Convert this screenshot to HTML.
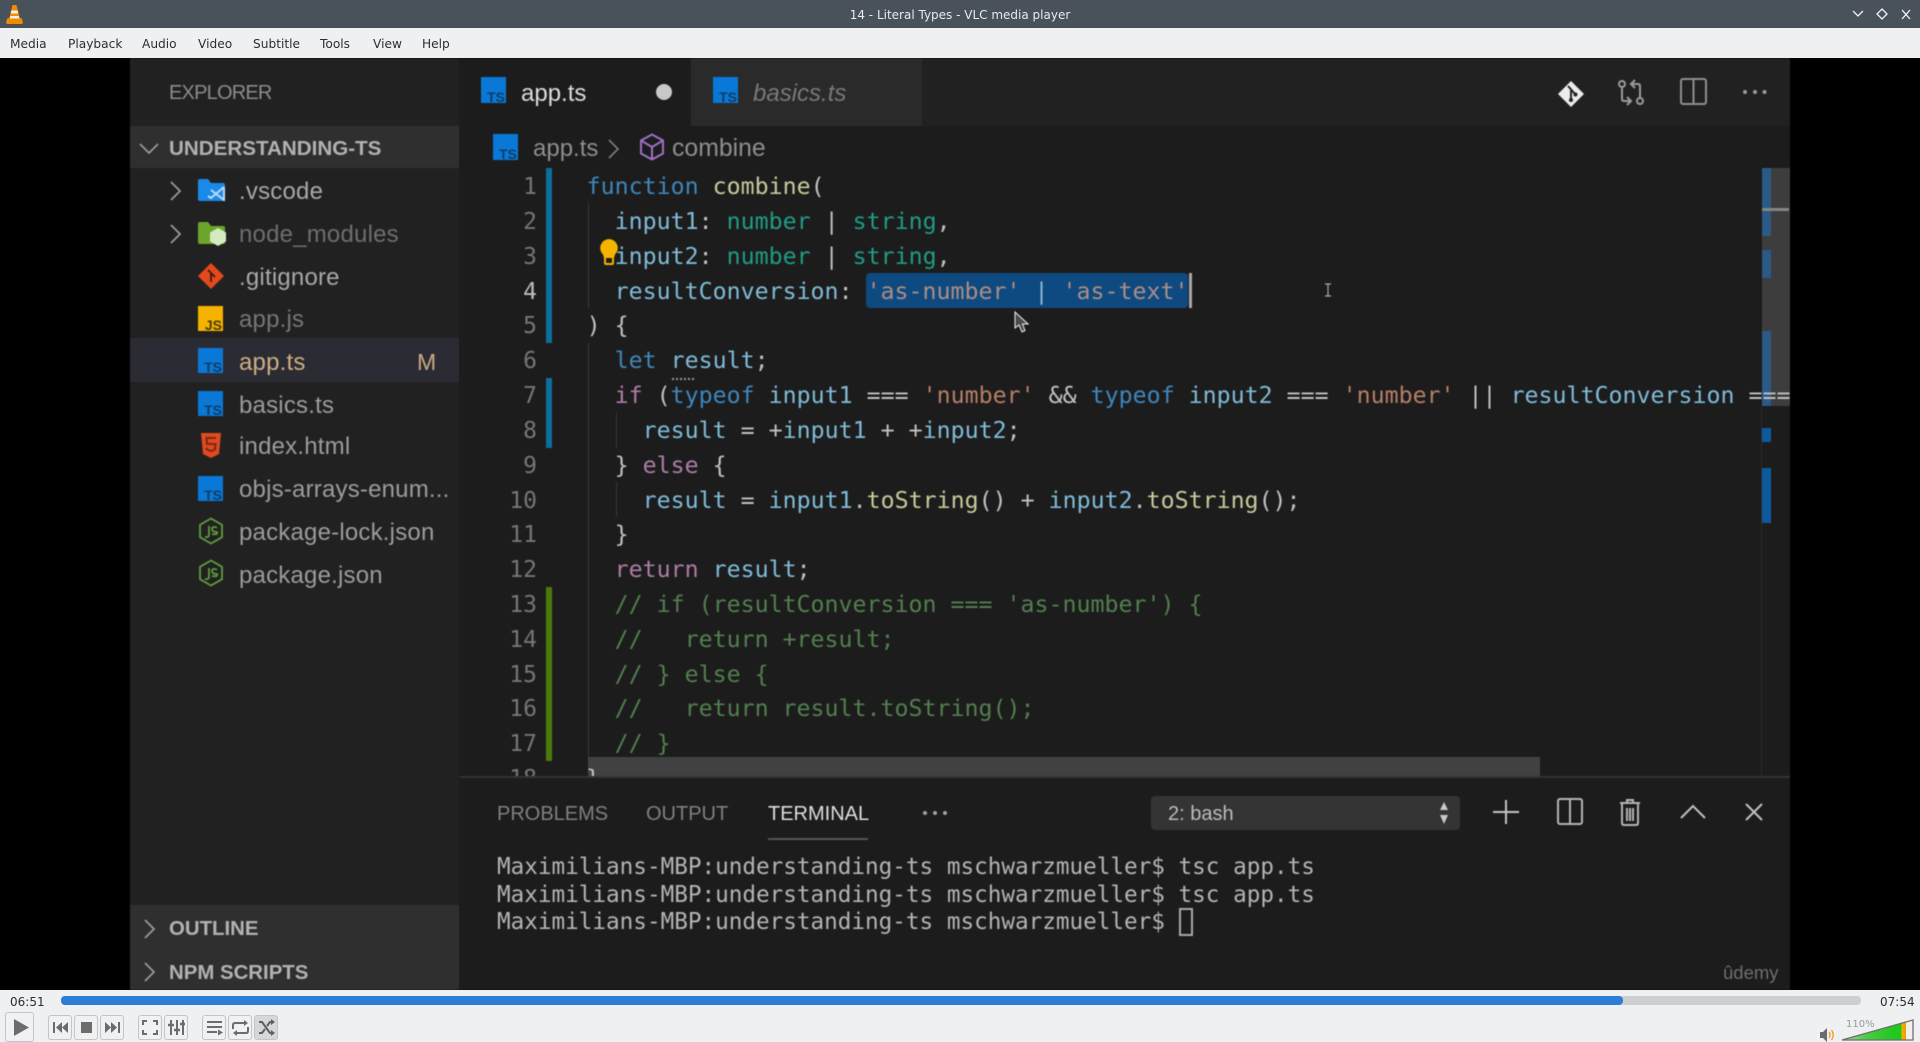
<!DOCTYPE html>
<html lang="en"><head><meta charset="utf-8"><title>14 - Literal Types - VLC media player</title>
<style>
html,body{margin:0;padding:0;width:1920px;height:1042px;overflow:hidden;background:#000}
body{position:relative;font-family:"DejaVu Sans","Liberation Sans",sans-serif}
.a{position:absolute;white-space:pre}
svg{position:absolute;overflow:visible}
#bar{left:0;top:0;width:1920px;height:28px;background:#49525a}
#menu{left:0;top:28px;width:1920px;height:30px;background:#eff0f2}
.m{top:29px;line-height:30px;font-size:12.2px;color:#2b2f33}
#video{position:absolute;left:0;top:58px;width:1920px;height:932px;background:#000;overflow:hidden}
#vid{position:absolute;left:0;top:-58px;width:1920px;height:1042px;filter:blur(.5px)}
.s{font-family:"Liberation Sans",sans-serif;font-size:24px;letter-spacing:.2px;color:#9c9c9c;left:239px;line-height:30px;margin-top:.8px}
.b{font-family:"Liberation Sans",sans-serif;font-weight:bold;color:#b2b2b2;font-size:20.4px;line-height:30px;left:169px}
.ts{position:absolute;width:25px;height:25px;background:#0a78d6;overflow:hidden}
.ts span{position:absolute;right:1px;bottom:-1px;font:bold 14px/14px "Liberation Sans",sans-serif;color:#0f3d66}
.ln{font-family:"DejaVu Sans Mono",monospace;font-size:23px;line-height:35px;color:#767676;width:40px;left:497px;text-align:right;margin-top:2.4px}
.c{font-family:"DejaVu Sans Mono",monospace;font-size:23.26px;line-height:35px;left:586.6px;color:#c2c2c2;margin-top:1.2px}
.k{color:#3f86bc}.f{color:#c9c99b}.v{color:#7fbbd8}.t{color:#1f9c86}.q{color:#b67f66}.r{color:#ad7ca6}.g{color:#527f4e}.sq{color:#ad8d84}
.tm{font-family:"DejaVu Sans Mono",monospace;font-size:22.65px;line-height:27px;left:497px;color:#b4b4b4;margin-top:2.9px}
.p{font-family:"Liberation Sans",sans-serif;font-size:20px;line-height:28px;top:800px;color:#808080}
.btn{position:absolute;box-sizing:border-box;width:24px;height:25px;top:1015px;border:1px solid #c3c5c8;border-radius:3px;background:#f0f1f3}
.gr{position:absolute;background:#373737;width:1px}
.mk{position:absolute;left:1762px;width:9px;background:#0d5a9e}
</style></head><body>
<div id="bar" class="a"></div>
<svg style="left:6px;top:5px" width="17" height="19" viewBox="0 0 17 19"><path d="M6.5 0h4l1.5 6 1.8 7H15.5l1.5 4.5-1 1.5H1l-1-1.5L1.500 13h1.800L5 6z" fill="#f08a00"/><path d="M5.500 5.500h6l.8 3h-7.600zM4.300 11h8.400l.5 2.500H3.800z" fill="#f7f0e6"/></svg>
<div class="a" style="left:560px;width:800px;top:1px;line-height:28px;text-align:center;font-size:12px;color:#e8eaec">14 - Literal Types - VLC media player</div>
<svg style="left:1850px;top:6px" width="66" height="16" viewBox="0 0 66 16" fill="none" stroke="#f2f2f2" stroke-width="1.300"><path d="M3 5l5 5 5-5M32 3l5 5-5 5-5-5zM52 4l8 9M60 4l-8 9"/></svg>
<div id="menu" class="a"></div>
<div class="a m" style="left:10px">Media</div><div class="a m" style="left:68px">Playback</div><div class="a m" style="left:142px">Audio</div><div class="a m" style="left:198px">Video</div><div class="a m" style="left:253px">Subtitle</div><div class="a m" style="left:320px">Tools</div><div class="a m" style="left:373px">View</div><div class="a m" style="left:422px">Help</div>

<div id="video"><div id="vid">
<!-- sidebar -->
<div class="a" style="left:130px;top:58px;width:329px;height:932px;background:#212121"></div>
<div class="a" style="left:459px;top:58px;width:1331px;height:932px;background:#1c1c1c"></div>
<div class="a" style="left:130px;top:126px;width:329px;height:42px;background:#2f2f2f"></div>
<div class="a" style="left:130px;top:338px;width:329px;height:44px;background:#2b2b33"></div>
<div class="a" style="left:130px;top:905px;width:329px;height:85px;background:#2f2f2f"></div>
<div class="a" style="left:169px;top:78px;line-height:30px;font:20px/30px 'Liberation Sans',sans-serif;letter-spacing:-.8px;color:#8c8c8c">EXPLORER</div>
<div class="a b" style="top:134px;font-size:20.600px">UNDERSTANDING-TS</div>
<svg style="left:139px;top:142px" width="20" height="12" fill="none" stroke="#999" stroke-width="1.800"><path d="M1 2l9 9 9-9"/></svg>
<svg style="left:170px;top:181px" width="12" height="20" fill="none" stroke="#9a9a9a" stroke-width="1.800"><path d="M1 1l9 9-9 9"/></svg>
<svg style="left:170px;top:224px" width="12" height="20" fill="none" stroke="#9a9a9a" stroke-width="1.800"><path d="M1 1l9 9-9 9"/></svg>
<svg style="left:197px;top:178px" width="30" height="26" viewBox="0 0 30 26"><path d="M1 3q0-2 2-2h8l3 4h12q2 0 2 2v14q0 2-2 2H3q-2 0-2-2z" fill="#1a8ae8"/><path d="M27 9v14M27 9L14 20l-3-2M14 12l13 10" fill="none" stroke="#b9daf8" stroke-width="2"/></svg>
<svg style="left:197px;top:221px" width="30" height="26" viewBox="0 0 30 26"><path d="M1 3q0-2 2-2h8l3 4h12q2 0 2 2v14q0 2-2 2H3q-2 0-2-2z" fill="#6ca52c"/><path d="M21 7l8 4.500v9L21 25l-8-4.500v-9z" fill="#d4eabf"/></svg>
<svg style="left:197px;top:262px" width="28" height="28" viewBox="0 0 28 28"><path d="M14 1l13 13-13 13L1 14z" fill="#e4491c"/><path d="M11 8l7 7M14 11v9M14 11" stroke="#3c1a0c" stroke-width="1.800" fill="none"/></svg>
<div class="a s" style="top:176px;color:#a8a8a8">.vscode</div>
<div class="a s" style="top:219px;color:#6e6e6e">node_modules</div>
<div class="a s" style="top:262px;color:#a8a8a8">.gitignore</div>
<div class="a" style="left:198px;top:306px;width:25px;height:25px;background:#f5b300;overflow:hidden"><span style="position:absolute;right:1px;bottom:-1px;font:bold 14px/14px 'Liberation Sans',sans-serif;color:#4a3a08">JS</span></div>
<div class="a s" style="top:304px;color:#767676">app.js</div>
<div class="ts" style="left:198px;top:348px"><span>TS</span></div>
<div class="a s" style="top:347px;color:#cfae85">app.ts</div>
<div class="a" style="left:417px;top:347px;line-height:30px;font-family:'Liberation Sans',sans-serif;font-size:23px;color:#c9aa82">M</div>
<div class="ts" style="left:198px;top:391px"><span>TS</span></div>
<div class="a s" style="top:390px">basics.ts</div>
<svg style="left:201px;top:433px" width="20" height="25" viewBox="0 0 20 25"><path d="M0 0h20l-2 21-8 4-8-4z" fill="#df4a20"/><path d="M15 5H5.500l.5 6h8.500l-.5 5.500-4 1.500-4-1.500-.2-2" fill="none" stroke="#7a2a10" stroke-width="2"/></svg>
<div class="a s" style="top:431px">index.html</div>
<div class="ts" style="left:198px;top:476px"><span>TS</span></div>
<div class="a s" style="top:474px">objs-arrays-enum...</div>
<svg style="left:198px;top:517px" width="26" height="28" viewBox="0 0 26 28" fill="none" stroke="#5f9b3e" stroke-width="1.800"><path d="M13 1.500l11 6.300v12.400l-11 6.300-11-6.300V7.800z"/><path d="M11 9v9q0 2.500-4 2M19 10.500q-5-1.500-5 1.500t5 3q1 3-5 2"/></svg>
<div class="a s" style="top:517px">package-lock.json</div>
<svg style="left:198px;top:559px" width="26" height="28" viewBox="0 0 26 28" fill="none" stroke="#5f9b3e" stroke-width="1.800"><path d="M13 1.500l11 6.300v12.400l-11 6.300-11-6.300V7.800z"/><path d="M11 9v9q0 2.500-4 2M19 10.500q-5-1.500-5 1.500t5 3q1 3-5 2"/></svg>
<div class="a s" style="top:560px">package.json</div>
<div class="a b" style="top:914px">OUTLINE</div>
<div class="a b" style="top:957.500px">NPM SCRIPTS</div>
<svg style="left:144px;top:919px" width="12" height="20" fill="none" stroke="#999" stroke-width="1.800"><path d="M1 1l9 9-9 9"/></svg>
<svg style="left:144px;top:962px" width="12" height="20" fill="none" stroke="#999" stroke-width="1.800"><path d="M1 1l9 9-9 9"/></svg>

<!-- tabs -->
<div class="a" style="left:922px;top:58px;width:868px;height:68px;background:#212121"></div>
<div class="a" style="left:691px;top:58px;width:231px;height:68px;background:#2a2a2a"></div>
<div class="ts" style="left:481px;top:77px;height:26px"><span>TS</span></div>
<div class="a" style="left:521px;top:79px;font:24px/30px 'Liberation Sans',sans-serif;color:#dcdcdc">app.ts</div>
<div class="a" style="left:656px;top:84px;width:16px;height:16px;border-radius:50%;background:#c8c8c8"></div>
<div class="ts" style="left:713px;top:77px;height:26px"><span>TS</span></div>
<div class="a" style="left:753px;top:79px;font:italic 24px/30px 'Liberation Sans',sans-serif;color:#797979">basics.ts</div>
<svg style="left:1556px;top:79px" width="30" height="30" viewBox="0 0 30 30"><path d="M15 2l13 13-13 13L2 15z" fill="#ececec"/><path d="M12 7l7 8M15 11v9" stroke="#222" stroke-width="2"/><circle cx="15" cy="21" r="2" fill="#222"/><circle cx="19.500" cy="15.500" r="2" fill="#222"/></svg>
<svg style="left:1617px;top:78px" width="28" height="28" viewBox="0 0 28 28" fill="none" stroke="#9a9a9a" stroke-width="2"><circle cx="5" cy="6" r="3"/><circle cx="23" cy="23" r="3"/><path d="M5 9v12q0 2 2 2h7M10 19l4 4-4 4M23 20V8q0-2-2-2h-6M18 2l-4 4 4 4" /></svg>
<svg style="left:1680px;top:78px" width="27" height="27" viewBox="0 0 27 27" fill="none" stroke="#8e8e8e" stroke-width="2"><rect x="1" y="1" width="25" height="25" rx="2"/><path d="M13.500 1v25"/></svg>
<svg style="left:1742px;top:89px" width="26" height="6" fill="#9a9a9a"><circle cx="3" cy="3" r="2"/><circle cx="13" cy="3" r="2"/><circle cx="22.500" cy="3" r="2"/></svg>

<!-- breadcrumbs -->
<div class="ts" style="left:493px;top:134px;height:26px"><span>TS</span></div>
<div class="a" style="left:533px;top:134px;font:24px/30px 'Liberation Sans',sans-serif;color:#8e8e8e">app.ts</div>
<svg style="left:608px;top:139px" width="12" height="20" fill="none" stroke="#7e7e7e" stroke-width="1.600"><path d="M1 1l9 9-9 9"/></svg>
<svg style="left:639px;top:133px" width="26" height="28" viewBox="0 0 26 28" fill="none" stroke="#a070c4" stroke-width="2"><path d="M13 1.500l11 6v13l-11 6-11-6v-13zM2 7.500l11 6.500 11-6.500M13 14v12.500"/></svg>
<div class="a" style="left:672px;top:134px;font:24.800px/30px 'Liberation Sans',sans-serif;color:#8e8e8e">combine</div>

<!-- gutter marks -->
<div class="a" style="left:546px;top:168px;width:6px;height:175px;background:#0b6e9c"></div>
<div class="a" style="left:546px;top:378px;width:6px;height:70px;background:#0b6e9c"></div>
<div class="a" style="left:546px;top:587px;width:6px;height:174px;background:#4c7a0a"></div>
<div class="gr" style="left:588px;top:203px;height:105px"></div>
<div class="gr" style="left:588px;top:343px;height:435px"></div>
<div class="gr" style="left:616px;top:413px;height:35px"></div>
<div class="gr" style="left:616px;top:482px;height:35px"></div>

<!-- overview ruler -->
<div class="a" style="left:1762px;top:168px;width:28px;height:238px;background:#3d3d3d"></div>
<div class="a" style="left:1761px;top:406px;width:1px;height:372px;background:#2c2c2c"></div>
<div class="mk" style="top:168px;height:68px;background:#2b5a86"></div>
<div class="a" style="left:1762px;top:208px;width:27px;height:3px;background:#858585"></div>
<div class="mk" style="top:250px;height:28px;background:#2b5a86"></div>
<div class="mk" style="top:331px;height:75px;background:#2b5a86"></div>
<div class="mk" style="top:428px;height:14px"></div>
<div class="mk" style="top:468px;height:55px"></div>

<!-- selection -->
<div class="a" style="left:866px;top:273px;width:322px;height:35px;border-radius:4px;background:#0e4a80"></div>
<div class="a" style="left:1189px;top:273px;width:3px;height:35px;background:#a8a8a8"></div>

<!-- line numbers -->
<div class="a ln" style="top:168px">1</div><div class="a ln" style="top:203px">2</div><div class="a ln" style="top:238px">3</div><div class="a ln" style="top:273px;color:#bdbdbd">4</div><div class="a ln" style="top:307px">5</div><div class="a ln" style="top:342px">6</div><div class="a ln" style="top:377px">7</div><div class="a ln" style="top:412px">8</div><div class="a ln" style="top:447px">9</div><div class="a ln" style="top:482px">10</div><div class="a ln" style="top:516px">11</div><div class="a ln" style="top:551px">12</div><div class="a ln" style="top:586px">13</div><div class="a ln" style="top:621px">14</div><div class="a ln" style="top:656px">15</div><div class="a ln" style="top:690px">16</div><div class="a ln" style="top:725px">17</div>

<!-- code -->
<div class="a c" style="top:168px"><span class="k">function</span> <span class="f">combine</span>(</div>
<div class="a c" style="top:203px">  <span class="v">input1</span>: <span class="t">number</span> | <span class="t">string</span>,</div>
<div class="a c" style="top:238px">  <span class="v">input2</span>: <span class="t">number</span> | <span class="t">string</span>,</div>
<div class="a c" style="top:273px">  <span class="v">resultConversion</span>: <span class="sq">'as-number'</span> <span style="color:#8fb4d4">|</span> <span class="sq">'as-text'</span></div>
<div class="a c" style="top:307px">) {</div>
<div class="a c" style="top:342px">  <span class="k">let</span> <span class="v">result</span>;</div>
<div class="a" style="left:672px;top:374px;width:22px;height:4px;border-bottom:2px dotted #9a9a9a"></div>
<div class="a" style="left:586.6px;top:377px;width:1203.4px;height:38px;overflow:hidden"><div class="a c" style="left:0;top:0">  <span class="r">if</span> (<span class="k">typeof</span> <span class="v">input1</span> === <span class="q">'number'</span> &amp;&amp; <span class="k">typeof</span> <span class="v">input2</span> === <span class="q">'number'</span> || <span class="v">resultConversion</span> =====</div></div>
<div class="a c" style="top:412px">    <span class="v">result</span> = +<span class="v">input1</span> + +<span class="v">input2</span>;</div>
<div class="a c" style="top:447px">  } <span class="r">else</span> {</div>
<div class="a c" style="top:482px">    <span class="v">result</span> = <span class="v">input1</span>.<span class="f">toString</span>() + <span class="v">input2</span>.<span class="f">toString</span>();</div>
<div class="a c" style="top:516px">  }</div>
<div class="a c" style="top:551px">  <span class="r">return</span> <span class="v">result</span>;</div>
<div class="a c g" style="top:586px">  // if (resultConversion === 'as-number') {</div>
<div class="a c g" style="top:621px">  //   return +result;</div>
<div class="a c g" style="top:656px">  // } else {</div>
<div class="a c g" style="top:690px">  //   return result.toString();</div>
<div class="a c g" style="top:725px">  // }</div>

<!-- bulb -->
<svg style="left:599px;top:239px" width="20" height="26" viewBox="0 0 20 26"><path d="M10 0a9 9 0 0 1 6 15.500l-1 3.500H5l-1-3.500A9 9 0 0 1 10 0z" fill="#f5b400"/><path d="M6 18h8v6q0 1-1 1H7q-1 0-1-1z" fill="none" stroke="#f5b400" stroke-width="2"/></svg>

<!-- mouse / ibeam -->
<svg style="left:1014px;top:311px" width="16" height="24" viewBox="0 0 16 24"><path d="M1 1v16l4-3 3 7 3-1.500-2.500-6.500H14z" fill="#4a4a4a" stroke="#f0f0f0" stroke-width="1"/></svg>
<svg style="left:1324px;top:283px" width="8" height="14" fill="none" stroke="#aaa" stroke-width="1.200"><path d="M1 1h6M4 1v12M1 13h6"/></svg>

<!-- h scrollbar + line 18 -->
<div class="a ln" style="top:760px;height:18px;overflow:hidden">18</div>
<div class="a" style="left:588px;top:757px;width:952px;height:21px;background:#414141"></div>
<div class="a c" style="top:760px;height:18px;overflow:hidden;left:586px">}</div>

<!-- panel -->
<div class="a" style="left:460px;top:776px;width:1330px;height:2px;background:#333"></div>
<div class="a" style="left:460px;top:778px;width:1330px;height:212px;background:#1c1c1c"></div>
<div class="a p" style="left:497px">PROBLEMS</div>
<div class="a p" style="left:646px">OUTPUT</div>
<div class="a p" style="left:768px;color:#dedede">TERMINAL</div>
<div class="a" style="left:768px;top:838px;width:100px;height:2px;background:#555"></div>
<svg style="left:922px;top:810px" width="26" height="6" fill="#a0a0a0"><circle cx="3" cy="3" r="2"/><circle cx="13" cy="3" r="2"/><circle cx="23" cy="3" r="2"/></svg>
<div class="a" style="left:1151px;top:796px;width:309px;height:34px;border-radius:4px;background:#343434"></div>
<div class="a" style="left:1168px;top:800px;font:20px/28px 'Liberation Sans',sans-serif;color:#bcbcbc">2: bash</div>
<svg style="left:1439px;top:801px" width="10" height="24" fill="#c8c8c8"><path d="M5 1l4 8H1zM5 23l-4-9h8z"/></svg>
<svg style="left:1492px;top:799px" width="28" height="26" fill="none" stroke="#c4c4c4" stroke-width="2"><path d="M14 1v24M1 13h26"/></svg>
<svg style="left:1557px;top:798px" width="26" height="27" fill="none" stroke="#b4b4b4" stroke-width="2"><rect x="1" y="1" width="24" height="25" rx="2"/><path d="M13 1v25"/></svg>
<svg style="left:1619px;top:798px" width="22" height="28" viewBox="0 0 22 28" fill="none" stroke="#b4b4b4" stroke-width="2"><path d="M1 5h20M8 5V2h6v3M3 5v20q0 2 2 2h12q2 0 2-2V5M8 10v13M11 10v13M14 10v13"/></svg>
<svg style="left:1680px;top:804px" width="26" height="15" fill="none" stroke="#c0c0c0" stroke-width="2"><path d="M1 14L13 2l12 12"/></svg>
<svg style="left:1745px;top:803px" width="18" height="18" fill="none" stroke="#c0c0c0" stroke-width="2"><path d="M1 1l16 16M17 1L1 17"/></svg>
<div class="a tm" style="top:851px">Maximilians-MBP:understanding-ts mschwarzmueller$ tsc app.ts</div>
<div class="a tm" style="top:879px">Maximilians-MBP:understanding-ts mschwarzmueller$ tsc app.ts</div>
<div class="a tm" style="top:906px">Maximilians-MBP:understanding-ts mschwarzmueller$</div>
<div class="a" style="left:1179px;top:908px;width:10px;height:24px;border:2px solid #a8a8a8"></div>
<div class="a" style="left:1723px;top:961px;font:18.500px/24px 'Liberation Sans',sans-serif;color:#6e6e6e">ûdemy</div>
</div></div>

<!-- controls -->
<div class="a" style="left:0;top:990px;width:1920px;height:52px;background:#eff0f2"></div>
<div class="a" style="left:10px;top:993px;line-height:18px;font-size:12px;color:#2a2d30">06:51</div>
<div class="a" style="left:1880px;top:993px;line-height:18px;font-size:12px;color:#2a2d30">07:54</div>
<div class="a" style="left:61px;top:996px;width:1800px;height:9px;border-radius:4px;background:#cdcfd2"></div>
<div class="a" style="left:61px;top:996px;width:1562px;height:9px;border-radius:4px;background:#2a7ed6"></div>
<div class="btn" style="left:5px;top:1012px;width:29px;height:30px"><svg style="left:8px;top:6px" width="15" height="17"><path d="M0 0l15 8.500L0 17z" fill="#6c6c6c"/></svg></div>
<div class="btn" style="left:48px"><svg style="left:4px;top:6px" width="15" height="11" fill="#6c6c6c"><path d="M0 0h2v11H0zM9 0v11L3 5.500zM15 0v11L9 5.500z"/></svg></div>
<div class="btn" style="left:74px"><svg style="left:6px;top:6px" width="11" height="11"><rect width="11" height="11" fill="#6c6c6c"/></svg></div>
<div class="btn" style="left:100px"><svg style="left:4px;top:6px" width="15" height="11" fill="#6c6c6c"><path d="M15 0h-2v11h2zM6 0v11l6-5.500zM0 0v11l6-5.500z"/></svg></div>
<div class="btn" style="left:138px"><svg style="left:3px;top:4px" width="16" height="15" fill="none" stroke="#6c6c6c" stroke-width="2"><path d="M1 5V1h4M11 1h4v4M15 10v4h-4M5 14H1v-4"/></svg></div>
<div class="btn" style="left:164px"><svg style="left:3px;top:4px" width="17" height="15" fill="none" stroke="#6c6c6c" stroke-width="2"><path d="M3 0v15M9 0v15M15 0v15"/><path d="M0 5h6M6 10h6M12 4h5" stroke-width="2.500"/></svg></div>
<div class="btn" style="left:202px"><svg style="left:4px;top:4px" width="16" height="16" fill="none" stroke="#6c6c6c" stroke-width="2"><path d="M0 2h15M0 7h15M0 12h10"/><path d="M11 9.500l5 3-5 3z" fill="#6c6c6c" stroke="none"/></svg></div>
<div class="btn" style="left:228px"><svg style="left:3px;top:4px" width="17" height="16" fill="none" stroke="#6c6c6c" stroke-width="2"><path d="M1 9V5q0-2 2-2h11M16 7v4q0 2-2 2H3"/><path d="M12 0l4 3-4 3zM5 10l-4 3 4 3z" fill="#6c6c6c" stroke="none"/></svg></div>
<div class="btn" style="left:254px;background:#d6d7d9"><svg style="left:4px;top:5px" width="16" height="15" fill="none" stroke="#5f5f5f" stroke-width="2"><path d="M0 1h3l8 11h2M0 12h3l3-4M8 5l3-4h2"/><path d="M12 -2l4 3-4 3zM12 9l4 3-4 3z" fill="#5f5f5f" stroke="none"/></svg></div>
<svg style="left:1820px;top:1028px" width="15" height="14" viewBox="0 0 15 14"><path d="M0 4h3l4-4v14l-4-4H0z" fill="#6c6c6c"/><path d="M9 4q2 3 0 6M11.500 2q3.500 5 0 10" fill="none" stroke="#f29a1e" stroke-width="1.300"/></svg>
<svg style="left:1840px;top:1018px" width="76" height="24" viewBox="0 0 76 24"><defs><linearGradient id="vg" x1="0" x2="1" y1="0" y2="0"><stop offset="0" stop-color="#a8dca0"/><stop offset=".35" stop-color="#4fcc4a"/><stop offset=".8" stop-color="#20c820"/><stop offset=".92" stop-color="#20c820"/><stop offset=".94" stop-color="#f5b000"/><stop offset="1" stop-color="#f59a00"/></linearGradient></defs><path d="M2 22L73 2v20z" fill="#f0f0f0"/><path d="M2 22L66 4v18z" fill="url(#vg)"/><path d="M2 22L73 2v20z" fill="none" stroke="#6f6f6f" stroke-width="1.300"/></svg>
<div class="a" style="left:1846px;top:1018px;line-height:14px;font-size:10px;color:#9a9a9a">110%</div>
</body></html>
